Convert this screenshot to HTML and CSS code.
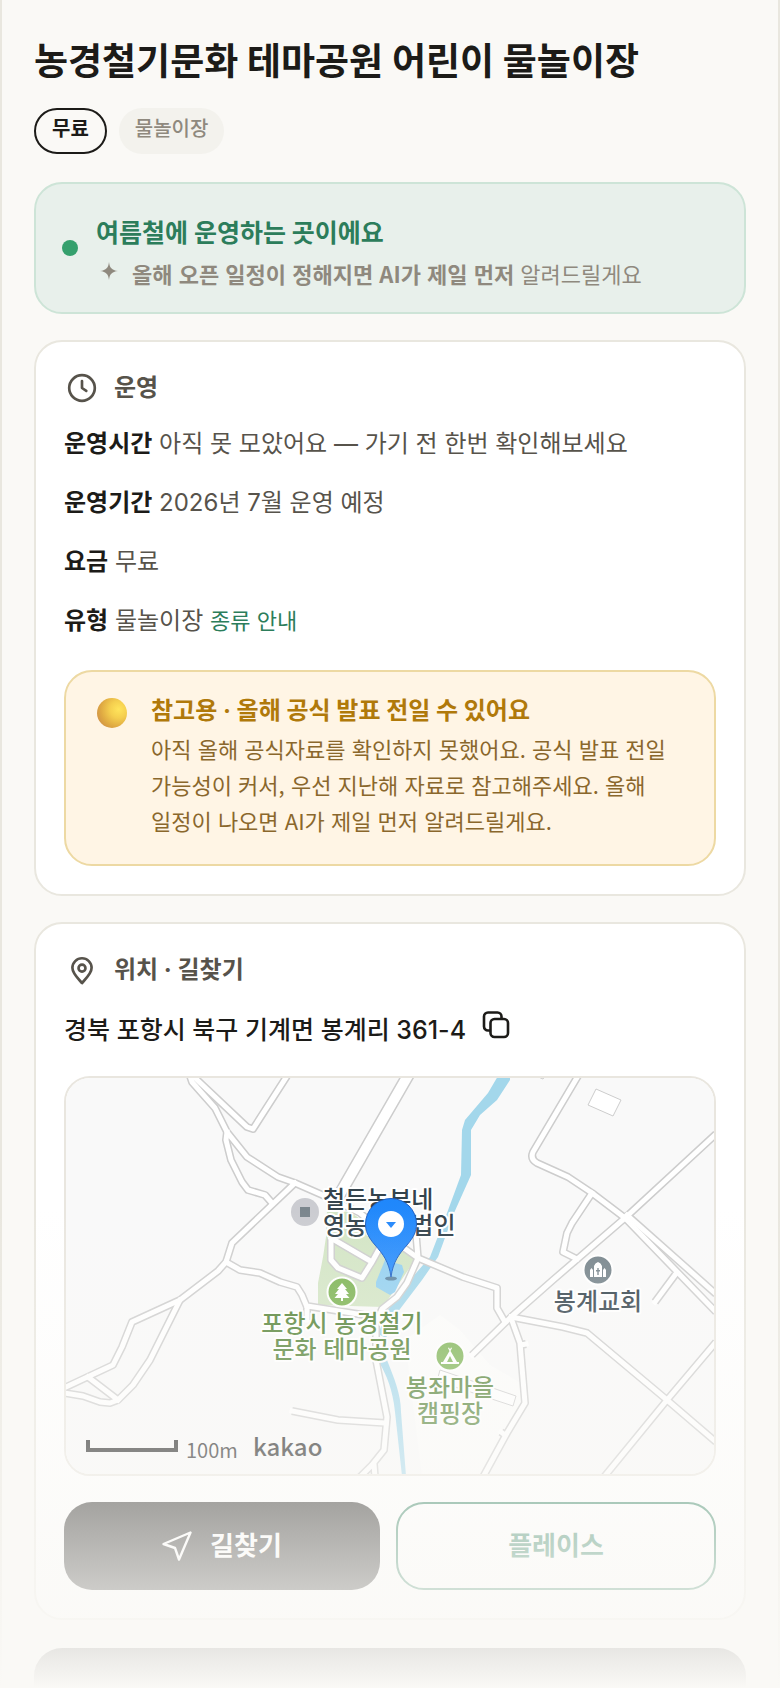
FILE: index.html
```html
<!DOCTYPE html>
<html lang="ko">
<head>
<meta charset="utf-8">
<meta name="viewport" content="width=device-width, initial-scale=1">
<title>농경철기문화 테마공원 어린이 물놀이장</title>
<link rel="stylesheet" href="styles.css">
</head>
<body>
<main class="page">
  <h1 class="title">농경철기문화 테마공원 어린이 물놀이장</h1>
  <ul class="chips">
    <li class="chip chip-strong">무료</li>
    <li class="chip">물놀이장</li>
  </ul>

  <section class="status">
    <span class="status-dot"></span>
    <div class="status-body">
      <p class="status-title">여름철에 운영하는 곳이에요</p>
      <p class="status-sub">
        <svg class="spark" viewBox="0 0 16 16" aria-hidden="true"><path d="M8 0C8.600 5 10.400 7.400 16 8C10.400 8.600 8.600 11 8 16C7.400 11 5.600 8.600 0 8C5.600 7.400 7.400 5 8 0Z"/></svg>
        <span><b>올해 오픈 일정이 정해지면 AI가 제일 먼저</b> 알려드릴게요</span>
      </p>
    </div>
  </section>

  <section class="card">
    <h2 class="card-head">
      <svg class="head-icon" viewBox="0 0 24 24" aria-hidden="true"><circle cx="12" cy="12" r="9.6"/><path d="M12 6.8V12l3.2 2.2"/></svg>
      운영
    </h2>
    <div class="rows">
      <p class="row"><strong>운영시간</strong> 아직 못 모았어요 — 가기 전 한번 확인해보세요</p>
      <p class="row"><strong>운영기간</strong> 2026년 7월 운영 예정</p>
      <p class="row"><strong>요금</strong> 무료</p>
      <p class="row"><strong>유형</strong> 물놀이장 <a class="row-link" href="#types">종류 안내</a></p>
    </div>
    <div class="notice">
      <span class="ball"></span>
      <div>
        <h3 class="notice-title">참고용 · 올해 공식 발표 전일 수 있어요</h3>
        <p class="notice-text">아직 올해 공식자료를 확인하지 못했어요. 공식 발표 전일 가능성이 커서, 우선 지난해 자료로 참고해주세요. 올해 일정이 나오면 AI가 제일 먼저 알려드릴게요.</p>
      </div>
    </div>
  </section>

  <section class="card">
    <h2 class="card-head">
      <svg class="head-icon" viewBox="0 0 24 24" aria-hidden="true"><path d="M12 21.8C10 19.2 4.800 15 4.800 10.4a7.200 7.200 0 0 1 14.400 0C19.200 15 14 19.200 12 21.800Z"/><circle cx="12" cy="10.6" r="2.6"/></svg>
      위치 · 길찾기
    </h2>
    <div class="address">
      <span>경북 포항시 북구 기계면 봉계리 361-4</span>
      <button class="copy" type="button" aria-label="주소 복사">
        <svg viewBox="0 0 28 28" aria-hidden="true"><rect x="8.5" y="8" width="17.500" height="18" rx="4"/><path d="M8.5 19.5H6a4 4 0 0 1-4-4V5.5a4 4 0 0 1 4-4h9.500a4 4 0 0 1 4 4V8"/></svg>
      </button>
    </div>

    <div class="map">
      <svg viewBox="66 1078 648 396" role="img" aria-label="지도">
        <rect class="land" x="66" y="1078" width="648" height="396"/>
        <path class="site" d="M405 1340L440 1315L460 1330L490 1365L524 1385L525 1403L483 1476H422Z"/>
        <path class="park" d="M327 1210L350 1212L417 1257L383 1307L318 1305V1283L323 1257L326 1237Z"/>
        <path class="water" d="M498 1076L488 1093L465 1120L462 1130L461 1175L447 1213L430 1257L410 1280L388 1310L378 1334L386 1338L397 1313L422 1280L438 1257L454 1213L471 1175V1130L480 1115L497 1100L510 1080V1076Z"/>
        <path class="water" d="M379 1345L387 1360C394 1378 401 1394 401 1412L406 1476H402L395 1412C393 1390 386 1374 380 1364Z"/>
        <path class="pond" d="M385 1260L402 1265L404 1272L395 1292L390 1295L376 1287V1282Z"/>
        <path class="building" d="M596 1089L621 1100L613 1116L588 1105ZM440 1370L516 1396L513 1406L437 1381ZM536 1076L543 1079L545 1076Z"/>
        <defs>
          <g id="roads">
            <path d="M190 1076L192 1082L215 1108L227 1132L247 1157L278 1177L295 1183L327 1197L360 1213L390 1238L418 1258L463 1277L497 1288V1308L505 1322"/>
            <path d="M193 1076L247 1127L253 1129L287 1076"/>
            <path d="M227 1132L226 1140L231 1160L242 1182L248 1190L265 1195L272 1203"/>
            <path d="M295 1183L232 1243L226 1262L218 1271L180 1300L132 1322L122 1347L113 1365L64 1388"/>
            <path d="M180 1300L150 1360L133 1385L118 1400L110 1403L100 1402L83 1396L64 1393"/>
            <path d="M88 1377L118 1400"/>
            <path d="M226 1262L240 1270L260 1273L280 1282L297 1287L302 1295L307 1307V1320M307 1306L383 1318"/>
            <path d="M331 1238V1260L338 1268L362 1278L372 1262L384 1240M331 1238L372 1262"/>
            <path d="M416 1234L418 1258L407 1283L397 1297L382 1309L376 1323V1360L387 1417L384 1450L372 1465L360 1477M374 1464L375 1477"/>
            <path d="M292 1411L338 1420L386 1423"/>
            <path d="M578 1076L533 1152Q530 1159 537 1163L568 1177L592 1193L625 1218L716 1312"/>
            <path d="M627 1215L716 1294"/>
            <path d="M716 1134L625 1218L553 1280L511 1317L472 1355"/>
            <path d="M592 1193L572 1223L567 1233L563 1252L577 1259"/>
            <path d="M675 1275L655 1302"/>
            <path d="M511 1317L563 1327L587 1333L667 1400L716 1442"/>
            <path d="M716 1342L667 1400L604 1477"/>
            <path d="M511 1318L520 1343L525 1403L507 1433L483 1477M521 1345L526 1344M505 1435L501 1432"/>
          </g>
          <linearGradient id="pin" x1="0" y1="0" x2="0" y2="1"><stop offset="0" stop-color="#1f87fb"/><stop offset="1" stop-color="#2c8ffd"/></linearGradient>
        </defs>
        <path class="avenue-edge" d="M410 1072L345 1185L335 1203"/>
        <use class="road-edge" href="#roads"/>
        <path class="avenue" d="M410 1072L345 1185L335 1203"/>
        <use class="road" href="#roads"/>

        <circle cx="305" cy="1212" r="14" fill="#cbccd1"/>
        <rect x="300" y="1207" width="10" height="10" fill="#7b868d"/>
        <text class="poi" x="323" y="1208">철든농부네</text>
        <text class="poi" x="323" y="1234">영농조합법인</text>

        <circle class="badge" cx="342" cy="1292" r="14.500" fill="#7cb352"/>
        <path fill="#fff" d="M342 1283L337 1289H339L335 1294H338L334.500 1298H341V1301H343V1298H349.500L346 1294H349L345 1289H347Z"/>
        <text class="poi poi-park poi-mid" x="342" y="1332">포항시 농경철기</text>
        <text class="poi poi-park poi-mid" x="342" y="1358">문화 테마공원</text>

        <circle class="badge" cx="450" cy="1356" r="14.500" fill="#7cb352"/>
        <path fill="#fff" fill-rule="evenodd" d="M448 1348L449.500 1351L443 1362H441V1364H459V1362H457L450.500 1351L452 1348L451 1347.500L450 1349.500L449 1347.500ZM450 1356L453 1362H447Z"/>
        <text class="poi poi-park poi-mid" x="450" y="1396">봉좌마을</text>
        <text class="poi poi-park poi-mid" x="450" y="1422">캠핑장</text>

        <circle class="badge" cx="598" cy="1270" r="14.500" fill="#75838a"/>
        <path fill="#fff" fill-rule="evenodd" d="M590 1277V1270L591.500 1268L593 1270V1277ZM603 1277V1270L604.500 1268L606 1270V1277ZM594 1277V1266Q595 1263 598 1262Q601 1263 602 1266V1277ZM597.300 1268V1270H596V1271.500H597.300V1275H598.700V1271.500H600V1270H598.700V1268Z"/>
        <text class="poi poi-mid" x="598" y="1310">봉계교회</text>

        <ellipse cx="391" cy="1278.500" rx="6" ry="2" fill="#35526b" opacity=".6"/>
        <path fill="url(#pin)" stroke="#1d5fc4" stroke-width="1" d="M391 1277C389 1262 383 1254 375 1245C368 1237 365.500 1231 365.500 1224A25.500 25.500 0 0 1 416.500 1224C416.500 1231 414 1237 407 1245C399 1254 393 1262 391 1277Z"/>
        <circle cx="391" cy="1224" r="13" fill="#fff"/>
        <path fill="#2488fb" d="M386 1222H396L391 1228Z"/>

        <path class="scale" d="M88 1440V1450H176V1440"/>
        <text class="scale-text" x="186" y="1458">100m</text>
        <text class="brand" x="253" y="1456">kakao</text>
      </svg>
    </div>

    <div class="actions">
      <button class="btn btn-dark" type="button">
        <svg class="btn-icon" viewBox="0 0 30 30" aria-hidden="true"><path d="M28.500 1.500L1.500 13L13 17L17 28.500Z"/></svg>
        길찾기
      </button>
      <button class="btn btn-line" type="button">플레이스</button>
    </div>
  </section>

  <div class="next-card"></div>
  <div class="fade"></div>
</main>
</body>
</html>
```
FILE: styles.css
```css
* { box-sizing: border-box; }

body {
  margin: 0;
  background: #faf9f6;
  color: #1c1b18;
  font-family: "Inter", "Noto Sans CJK KR", sans-serif;
  font-size: 24px;
  line-height: 40px;
  word-break: keep-all;
}

h1, h2, h3, p, ul { margin: 0; padding: 0; }
svg { display: block; }
button { font: inherit; cursor: pointer; }

.page {
  position: relative;
  min-height: 100vh;
  padding: 38px 32px 0;
  border: 0 solid #e9e7df;
  border-width: 0 2px;
}

.title { font-size: 37px; line-height: 48px; font-weight: 700; }

.chips { display: flex; gap: 12px; margin: 22px 0 28px; list-style: none; }
.chip {
  padding: 6px 16px 10px;
  border-radius: 23px;
  background: #f3f2ed;
  color: #8f897e;
  font-size: 20px;
  line-height: 30px;
  font-weight: 500;
}
.chip-strong {
  padding: 4px 16px 8px;
  border: 2px solid #1c1b18;
  background: none;
  color: #1c1b18;
  font-weight: 700;
}

.status {
  display: flex;
  align-items: center;
  gap: 18px;
  padding: 19px 26px;
  border: 2px solid #cde4d7;
  border-radius: 28px;
  background: #e8f0eb;
}
.status-dot { flex: none; width: 16px; height: 16px; border-radius: 50%; background: #35a06d; }
.status-body { padding-top: 10px; }
.status-title { color: #2c7d5b; font-size: 25px; font-weight: 700; }
.status-sub {
  display: flex;
  align-items: center;
  gap: 14px;
  padding-left: 4px;
  color: #8f897e;
  font-family: "Noto Sans CJK KR", sans-serif;
  font-size: 22px;
}
.spark { width: 18px; height: 18px; margin-bottom: 4px; fill: #8f897e; }

.card {
  margin-top: 26px;
  padding: 28px;
  border: 2px solid #e9e7df;
  border-radius: 28px;
  background: #fff;
}
.card-head {
  display: flex;
  align-items: center;
  gap: 16px;
  padding-left: 2px;
  color: #57534b;
  font-size: 24px;
  line-height: 36px;
  font-weight: 700;
}
.head-icon {
  width: 32px;
  height: 32px;
  fill: none;
  stroke: #57534b;
  stroke-width: 2;
  stroke-linecap: round;
  stroke-linejoin: round;
}

.rows { display: grid; gap: 19px; margin-top: 18px; }
.row { color: #57534b; }
.row strong { color: #1c1b18; font-weight: 700; }
.row-link { color: #2c7d5b; font-size: 22px; text-decoration: none; }

.notice {
  display: flex;
  gap: 24px;
  margin-top: 29px;
  padding: 20px 28px 26px 31px;
  border: 2px solid #edd9a3;
  border-radius: 28px;
  background: #fff5e5;
}
.ball {
  flex: none;
  width: 30px;
  height: 30px;
  margin-top: 6px;
  border-radius: 50%;
  background: radial-gradient(circle at 72% 38%, #ffe45c 0, #f5cf4f 30%, #dfa942 62%, #cf9048 85%, #d9826a 100%);
}
.notice-title { color: #b0790a; font-size: 24px; line-height: 38px; font-weight: 700; }
.notice-text {
  color: #8a672c;
  font-family: "Noto Sans CJK KR", sans-serif;
  font-size: 22px;
  line-height: 36px;
}

.address {
  display: flex;
  align-items: center;
  gap: 16px;
  margin-top: 22px;
  font-size: 25px;
  font-weight: 500;
}
.copy { margin-bottom: 10px; padding: 0; border: 0; background: none; }
.copy svg { width: 28px; height: 28px; fill: none; stroke: #1c1b18; stroke-width: 2.6; }

.map {
  margin-top: 26px;
  overflow: hidden;
  border: 2px solid #e9e6df;
  border-radius: 26px;
}
.map svg { width: 100%; height: auto; }
.land { fill: #f9f9f9; }
.site { fill: #fcfcfb; }
.park { fill: #d3e5c5; }
.water { fill: #a3d7eb; }
.pond { fill: #93d0f0; }
.building { fill: #fff; stroke: #ccc; stroke-width: 1; }
.road-edge, .avenue-edge { fill: none; stroke: #cdcdcd; stroke-width: 8; stroke-linejoin: round; }
.road, .avenue { fill: none; stroke: #fff; stroke-width: 5; stroke-linejoin: round; stroke-linecap: square; }
.avenue-edge { stroke-width: 13; }
.avenue { stroke-width: 10; }
.badge { stroke: #fff; stroke-width: 2; }
.poi {
  fill: #34434c;
  stroke: #fff;
  stroke-width: 4;
  stroke-linejoin: round;
  paint-order: stroke;
  font-family: "Noto Sans CJK KR", sans-serif;
  font-size: 24px;
  font-weight: 500;
}
.poi-mid { text-anchor: middle; }
.poi-park { fill: #4f7f31; }
.scale { fill: none; stroke: #111; stroke-width: 4; }
.scale-text { fill: #111; font-family: "Noto Sans CJK KR", sans-serif; font-size: 20px; font-weight: 400; }
.brand { fill: #111; font-family: "Noto Sans CJK KR", sans-serif; font-size: 24px; font-weight: 500; }

.actions { display: flex; gap: 16px; margin-top: 26px; }
.btn {
  display: flex;
  flex: 1;
  align-items: center;
  justify-content: center;
  gap: 18px;
  height: 88px;
  border: 0;
  border-radius: 28px;
  font-size: 26px;
  font-weight: 700;
}
.btn-dark { background: #1c1b18; color: #fff; }
.btn-line { border: 2px solid #2c7d5b; background: #fff; color: #2c7d5b; }
.btn-icon { width: 30px; height: 30px; fill: none; stroke: #fff; stroke-width: 2.4; stroke-linejoin: round; }

.next-card { height: 40px; margin-top: 28px; border-radius: 28px 28px 0 0; background: #1c1b18; }

/* Fades the lower part of the page into the background */
.fade {
  position: absolute;
  right: -2px;
  bottom: 0;
  left: -2px;
  height: 480px;
  background: linear-gradient(rgba(250, 249, 246, 0), #faf9f6);
  pointer-events: none;
}
```
